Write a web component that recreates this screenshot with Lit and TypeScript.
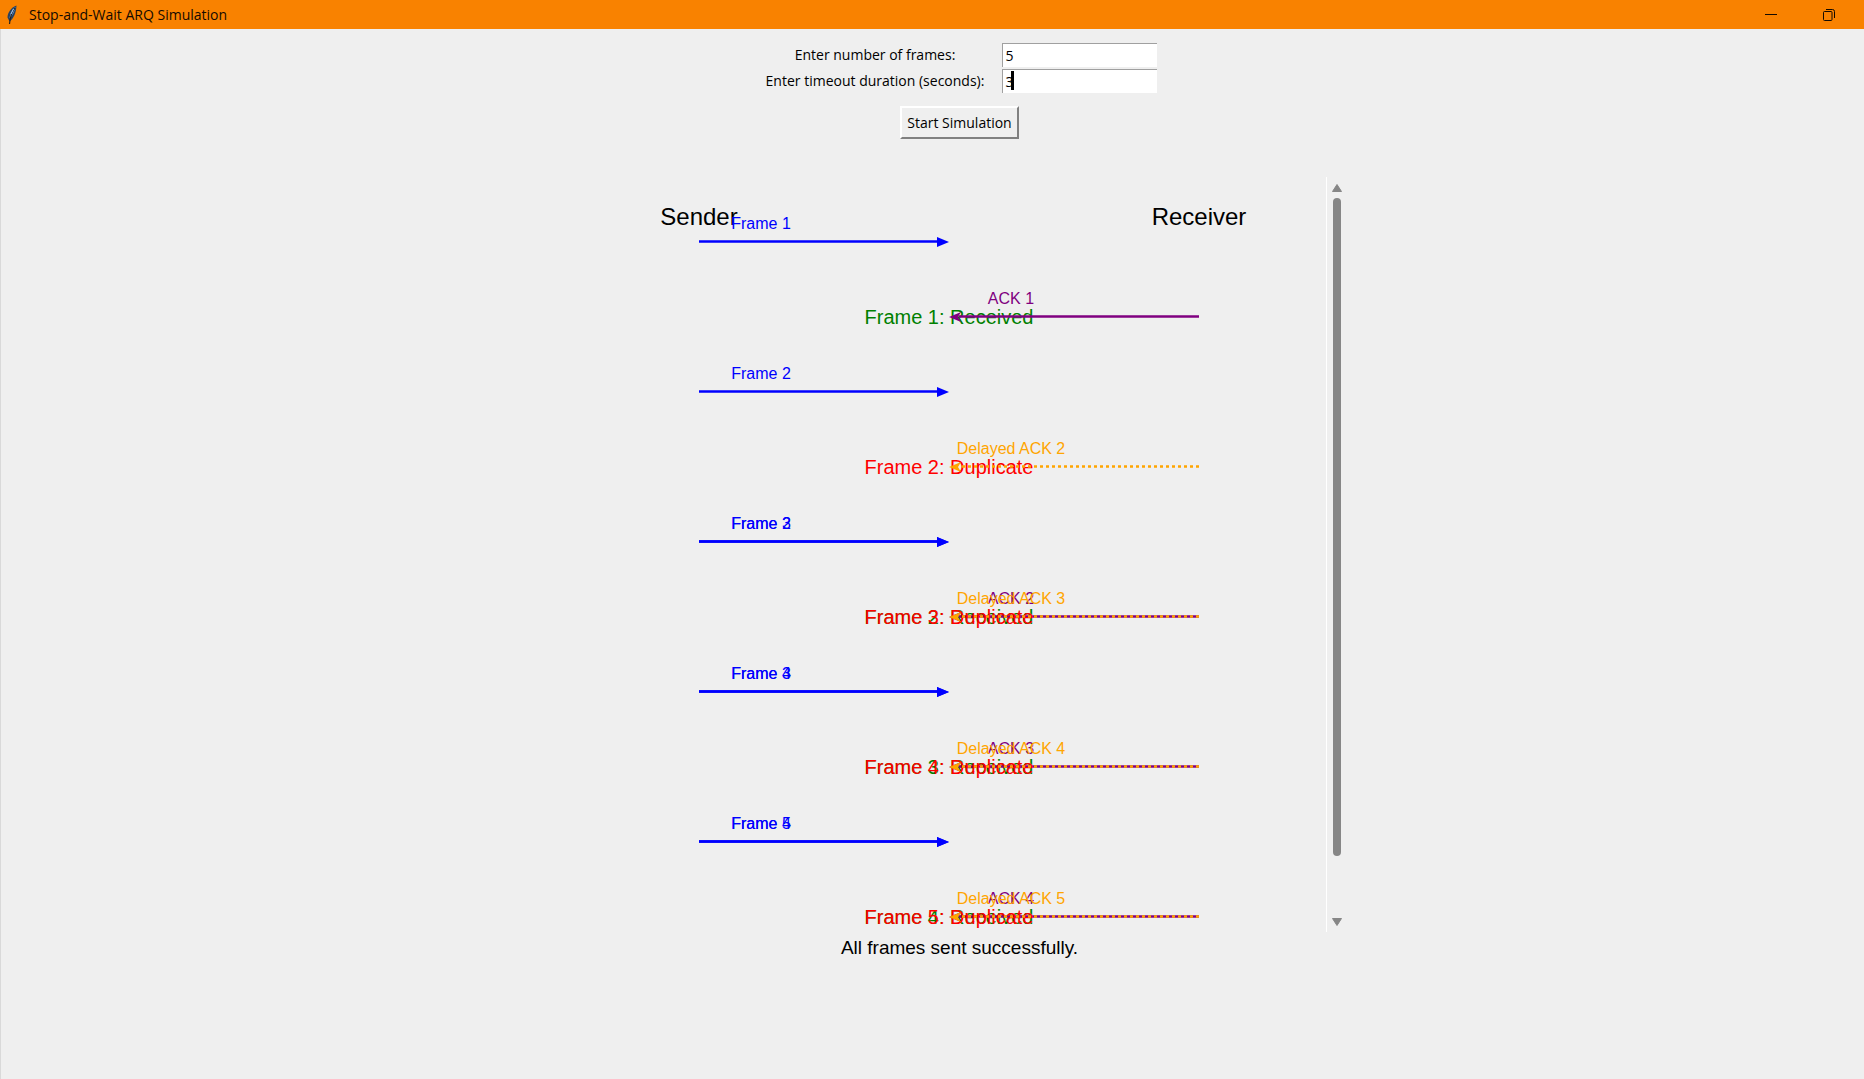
import { LitElement, html, svg, css } from "lit";
import { customElement, state } from "lit/decorators.js";

interface Step {
  row: number;
  frame: number;
  outcome: "received" | "duplicate";
}

const SENDER_X = 126;
const MIDDLE_X = 376;
const RECEIVER_X = 626;
const FIRST_ROW_Y = 65;
const ROW_PITCH = 150;
const REPLY_OFFSET = 75;

const STEPS: Step[] = [
  { row: 0, frame: 1, outcome: "received" },
  { row: 1, frame: 2, outcome: "duplicate" },
  { row: 2, frame: 2, outcome: "received" },
  { row: 2, frame: 3, outcome: "duplicate" },
  { row: 3, frame: 3, outcome: "received" },
  { row: 3, frame: 4, outcome: "duplicate" },
  { row: 4, frame: 4, outcome: "received" },
  { row: 4, frame: 5, outcome: "duplicate" },
];

@customElement("arq-titlebar")
class ArqTitlebar extends LitElement {
  static styles = css`
    :host {
      display: block;
    }
    .bar {
      display: flex;
      align-items: center;
      height: 29px;
      background: #f98200;
      color: #140a00;
      font: 14px/28px "Open Sans", "Noto Sans", sans-serif;
    }
    .feather {
      width: 14px;
      height: 22px;
      margin: 0 10px 2px 5px;
    }
    .title {
      flex: 1;
      margin: 0;
      font: inherit;
    }
    .control {
      display: flex;
      align-items: center;
      justify-content: center;
      width: 58px;
      height: 28px;
      padding: 0;
      border: 0;
      background: none;
    }
    .controls {
      display: flex;
      padding-right: 6px;
    }
  `;

  render() {
    return html`
      <header class="bar">
        <svg class="feather" viewBox="0 0 14 22" aria-hidden="true">
          <path d="M11.5 2.5C7 4 2.5 9 2.5 14.5L4.5 18.5C8 16 11 11 11.5 2.5Z" fill="#29415f" />
          <path d="M10.5 4C7.5 6 5 10 4.5 15.5C7.5 12.5 9.5 9 10.5 4Z" fill="#5c9be0" />
          <path d="M10 5C7 9 5 13.5 4.5 21" fill="none" stroke="#2b2119" stroke-width="1.2" />
          <path d="M8.5 6L6 11" stroke="#a9cdf4" stroke-width="1" />
        </svg>
        <h1 class="title">Stop-and-Wait ARQ Simulation</h1>
        <div class="controls">
          <button class="control" aria-label="Minimize">
            <svg width="12" height="12" viewBox="0 0 12 12">
              <path d="M0 5.5H12" stroke="#140a00" />
            </svg>
          </button>
          <button class="control" aria-label="Restore">
            <svg width="12" height="12" viewBox="0 0 12 12" fill="none" stroke="#140a00">
              <rect x="0.5" y="2.5" width="8.5" height="9" rx="1" />
              <path d="M3 0.5H9.5Q11.5 0.5 11.5 2.5V9" />
            </svg>
          </button>
        </div>
      </header>
    `;
  }
}

@customElement("arq-canvas")
class ArqCanvas extends LitElement {
  static styles = css`
    :host {
      display: block;
    }
    .view {
      display: flex;
    }
    .canvas {
      display: block;
      width: 753px;
      height: 755px;
      border-right: 1px solid #ffffff;
      font-family: "Liberation Sans", Arial, sans-serif;
    }
    .canvas text {
      text-anchor: middle;
    }
    .heading {
      font-size: 24px;
      fill: #000000;
    }
    .label {
      font-size: 16px;
    }
    .result {
      font-size: 20px;
    }
    .line {
      stroke-width: 2.5px;
      fill: none;
    }
    .dotted {
      stroke-dasharray: 3 3;
    }
    .scrollbar {
      display: flex;
      flex-direction: column;
      align-items: center;
      width: 19px;
    }
    .step {
      display: flex;
      align-items: center;
      justify-content: center;
      width: 19px;
      height: 21px;
      padding: 0;
      border: 0;
      background: none;
    }
    .step.down {
      height: 20px;
    }
    .track {
      flex: 1;
      display: flex;
      justify-content: center;
      width: 100%;
    }
    .thumb {
      width: 8px;
      height: 658px;
      border-radius: 4px;
      background: #868686;
    }
  `;

  private frameArrow(row: number, frame: number) {
    const y = FIRST_ROW_Y + row * ROW_PITCH;
    return svg`
      <path class="line" stroke="#0000ff" d=${`M${SENDER_X} ${y - 0.5}H366`} />
      <path fill="#0000ff" d=${`M${MIDDLE_X} ${y}L364 ${y - 5}V${y + 5}Z`} />
      <text class="label" fill="#0000ff" x="188" y=${y - 13}>Frame ${frame}</text>
    `;
  }

  private reply(step: Step) {
    const y = FIRST_ROW_Y + step.row * ROW_PITCH + REPLY_OFFSET;
    const ok = step.outcome === "received";
    const lineColor = ok ? "#800080" : "#ffa500";
    return svg`
      <text class="result" fill=${ok ? "#008000" : "#ff0000"} x=${MIDDLE_X} y=${y + 7}>Frame ${step.frame}: ${ok ? "Received" : "Duplicate"}</text>
      <path class=${ok ? "line" : "line dotted"} stroke=${lineColor} d=${`M${RECEIVER_X} ${y - 0.5}H386`} />
      <path fill=${lineColor} d=${`M${MIDDLE_X} ${y}L388 ${y - 5}L385 ${y}L388 ${y + 5}Z`} />
      <text class="label" fill=${lineColor} x="438" y=${y - 13}>${ok ? "ACK" : "Delayed ACK"} ${step.frame}</text>
    `;
  }

  render() {
    return html`
      <section class="view">
        <svg class="canvas" viewBox="0 0 753 755">
          <text class="heading" x="126" y="48">Sender</text>
          <text class="heading" x="626" y="48">Receiver</text>
          ${STEPS.map((step) => [this.frameArrow(step.row, step.frame), this.reply(step)])}
        </svg>
        <div class="scrollbar">
          <button class="step up" aria-label="Scroll up">
            <svg width="10" height="8" viewBox="0 0 10 8">
              <path d="M5 0.5L9.5 7.5H0.5Z" fill="#868686" stroke="#868686" stroke-linejoin="round" />
            </svg>
          </button>
          <div class="track"><div class="thumb"></div></div>
          <button class="step down" aria-label="Scroll down">
            <svg width="10" height="8" viewBox="0 0 10 8">
              <path d="M5 7.5L9.5 0.5H0.5Z" fill="#868686" stroke="#868686" stroke-linejoin="round" />
            </svg>
          </button>
        </div>
      </section>
    `;
  }
}

@customElement("app-root")
class AppRoot extends LitElement {
  static styles = css`
    :host {
      display: block;
      min-height: 100vh;
      background: #efefef;
      color: #000000;
    }
    .content {
      box-sizing: border-box;
      display: flex;
      flex-direction: column;
      align-items: center;
      min-height: calc(100vh - 29px);
      padding: 14px 0 0 54px;
      border-left: 1px solid #d9d9d9;
      font: 14px/24px "Open Sans", "Noto Sans", sans-serif;
    }
    .form {
      display: flex;
      flex-direction: column;
      align-items: center;
      gap: 13px;
    }
    .fields {
      display: grid;
      grid-template-columns: auto 155px;
      column-gap: 18px;
      row-gap: 2px;
      padding-left: 4px;
      text-align: center;
    }
    .entry {
      position: relative;
      display: flex;
    }
    .input {
      box-sizing: border-box;
      width: 100%;
      height: 24px;
      padding: 0 2px;
      border: 0 solid #a0a0a0;
      border-width: 1px 0 0 1px;
      border-radius: 0;
      outline: none;
      background: #ffffff;
      color: inherit;
      font: inherit;
    }
    .caret {
      position: absolute;
      left: 9px;
      top: 2px;
      width: 3px;
      height: 19px;
      background: #000000;
    }
    .start {
      box-sizing: border-box;
      width: 119px;
      height: 33px;
      padding: 0;
      border: 2px solid;
      border-color: #ffffff #808080 #808080 #ffffff;
      border-radius: 0;
      background: #efefef;
      color: inherit;
      font: inherit;
      white-space: nowrap;
    }
    .diagram {
      margin-top: 38px;
    }
    .status {
      margin: 0;
      font: 19px/32px "Liberation Sans", Arial, sans-serif;
    }
  `;

  @state() private frames = "5";
  @state() private timeout = "3";

  render() {
    return html`
      <arq-titlebar></arq-titlebar>
      <main class="content">
        <form class="form" @submit=${(e: Event) => e.preventDefault()}>
          <div class="fields">
            <label for="frames">Enter number of frames:</label>
            <div class="entry">
              <input class="input" id="frames" type="text" .value=${this.frames} />
            </div>
            <label for="timeout">Enter timeout duration (seconds):</label>
            <div class="entry">
              <input class="input" id="timeout" type="text" .value=${this.timeout} />
              <span class="caret"></span>
            </div>
          </div>
          <button class="start" type="submit">Start Simulation</button>
        </form>
        <arq-canvas class="diagram"></arq-canvas>
        <p class="status" role="status">All frames sent successfully.</p>
      </main>
    `;
  }
}
